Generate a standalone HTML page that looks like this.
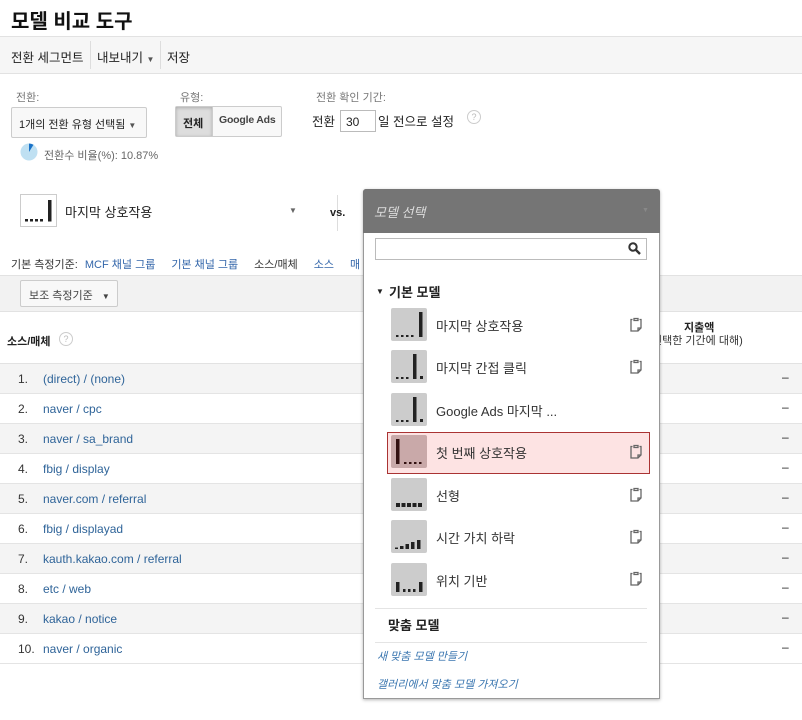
<!DOCTYPE html>
<html><head><meta charset="utf-8"><style>
*{margin:0;padding:0;box-sizing:border-box}
body{width:802px;height:720px;overflow:hidden;background:#fff;font-family:"Liberation Sans","Noto Sans CJK KR",sans-serif;color:#222;position:relative;font-size:12px}
.a{position:absolute;white-space:nowrap}
.lnk{color:#3366aa}
.row{position:absolute;left:0;width:802px;height:30px;border-bottom:1px solid #e4e4e4}
.row .n{position:absolute;left:18px;top:8px;font-size:12px;color:#333}
.row .t{position:absolute;left:43px;top:8px;font-size:12px;color:#2f6499}
.row .d{position:absolute;left:782px;top:6px;font-size:12px}
.item{position:absolute;left:436px;font-size:13px;color:#333}
.clip{position:absolute;left:630px}
</style></head><body>
<div class="a" style="left:11px;top:5px;font-size:20px;font-weight:bold;color:#111">모델 비교 도구</div>
<div class="a" style="left:0;top:36px;width:802px;height:38px;background:#f6f6f6;border-top:1px solid #e2e2e2;border-bottom:1px solid #e2e2e2"></div>
<div class="a" style="left:11px;top:47px;font-size:12.5px">전환 세그먼트</div>
<div class="a" style="left:90px;top:41px;width:1px;height:28px;background:#ddd"></div>
<div class="a" style="left:97px;top:47px;font-size:12.5px">내보내기 <span style="font-size:8px;color:#555">▼</span></div>
<div class="a" style="left:160px;top:41px;width:1px;height:28px;background:#ddd"></div>
<div class="a" style="left:167px;top:47px;font-size:12.5px">저장</div>
<div class="a" style="left:16px;top:89px;font-size:11px;color:#777">전환:</div>
<div class="a" style="left:11px;top:107px;width:136px;height:31px;border:1px solid #ccc;border-radius:2px;background:#f8f8f8;font-size:11px;padding:8px 0 0 7px">1개의 전환 유형 선택됨 <span style="font-size:8px;color:#555">▼</span></div>
<svg class="a" style="left:20px;top:143px" width="18" height="18"><circle cx="9" cy="9" r="8.5" fill="#bfe0f2"/><path d="M9 9V0.5A8.5 8.5 0 0 1 13.5 1.8Z" fill="#1a73c8"/></svg>
<div class="a" style="left:44px;top:147px;font-size:11px;color:#666">전환수 비율(%): 10.87%</div>
<div class="a" style="left:180px;top:89px;font-size:11px;color:#777">유형:</div>
<div class="a" style="left:175px;top:106px;width:107px;height:31px;border:1px solid #ccc;border-radius:2px;background:#f8f8f8"></div>
<div class="a" style="left:176px;top:107px;width:36px;height:29px;background:#ddd;box-shadow:inset 0 1px 3px #aaa;font-size:11px;font-weight:bold;padding:8px 0 0 7px">전체</div>
<div class="a" style="left:212px;top:107px;width:1px;height:29px;background:#ccc"></div>
<div class="a" style="left:219px;top:114px;font-size:10.5px;font-weight:bold;color:#444;letter-spacing:-0.2px">Google Ads</div>
<div class="a" style="left:316px;top:89px;font-size:11px;color:#777">전환 확인 기간:</div>
<div class="a" style="left:312px;top:111px;font-size:12.5px">전환</div>
<div class="a" style="left:340px;top:110px;width:36px;height:22px;border:1px solid #bbb;font-size:12px;padding:4px 0 0 5px">30</div>
<div class="a" style="left:378px;top:111px;font-size:12.5px">일 전으로 설정</div>
<div class="a" style="left:467px;top:110px;width:14px;height:14px;border:1px solid #ccc;border-radius:50%;font-size:9px;color:#bbb;text-align:center;line-height:12px">?</div>
<div class="a" style="left:20px;top:194px;width:37px;height:33px;border:1px solid #ccc;background:#fff"><svg width="35" height="31"><rect x="4" y="24" width="3" height="2.5" fill="#222"/><rect x="9" y="24" width="3" height="2.5" fill="#222"/><rect x="14" y="24" width="3" height="2.5" fill="#222"/><rect x="19" y="24" width="3" height="2.5" fill="#222"/><rect x="27" y="5" width="3.5" height="21.5" fill="#222"/></svg></div>
<div class="a" style="left:65px;top:202px;font-size:13px">마지막 상호작용</div>
<div class="a" style="left:289px;top:206px;font-size:8px;color:#666">▼</div>
<div class="a" style="left:337px;top:195px;width:1px;height:36px;background:#ddd"></div>
<div class="a" style="left:330px;top:207px;font-size:11px;font-weight:bold">vs.</div>
<div class="a" style="left:11px;top:256px;font-size:11px;color:#333">기본 측정기준: <span class="lnk" style="margin-left:4px">MCF 채널 그룹</span><span class="lnk" style="margin-left:16px">기본 채널 그룹</span><span style="margin-left:16px">소스/매체</span><span class="lnk" style="margin-left:16px">소스</span><span class="lnk" style="margin-left:16px">매</span></div>
<div class="a" style="left:0;top:275px;width:802px;height:37px;background:#f2f2f2;border-top:1px solid #e2e2e2;border-bottom:1px solid #e2e2e2"></div>
<div class="a" style="left:20px;top:280px;width:98px;height:27px;border:1px solid #ccc;border-radius:2px;background:#f8f8f8;font-size:11px;color:#444;padding:6px 0 0 8px">보조 측정기준 <span style="font-size:8px;margin-left:6px">▼</span></div>
<div class="a" style="left:7px;top:333px;font-size:11px;font-weight:bold">소스/매체</div>
<div class="a" style="left:59px;top:332px;width:14px;height:14px;border:1px solid #ccc;border-radius:50%;font-size:9px;color:#bbb;text-align:center;line-height:12px">?</div>
<div class="a" style="left:684px;top:319px;font-size:11px;font-weight:bold">지출액</div>
<div class="a" style="left:652px;top:332px;font-size:11px;color:#333">선택한 기간에 대해)</div>
<div class="a" style="left:0;top:363px;width:802px;height:1px;background:#e2e2e2"></div>
<div class="row" style="top:364px;background:#f4f4f4"><span class="n">1.</span><span class="t">(direct) / (none)</span><span class="d">–</span></div>
<div class="row" style="top:394px"><span class="n">2.</span><span class="t">naver / cpc</span><span class="d">–</span></div>
<div class="row" style="top:424px;background:#f4f4f4"><span class="n">3.</span><span class="t">naver / sa_brand</span><span class="d">–</span></div>
<div class="row" style="top:454px"><span class="n">4.</span><span class="t">fbig / display</span><span class="d">–</span></div>
<div class="row" style="top:484px;background:#f4f4f4"><span class="n">5.</span><span class="t">naver.com / referral</span><span class="d">–</span></div>
<div class="row" style="top:514px"><span class="n">6.</span><span class="t">fbig / displayad</span><span class="d">–</span></div>
<div class="row" style="top:544px;background:#f4f4f4"><span class="n">7.</span><span class="t">kauth.kakao.com / referral</span><span class="d">–</span></div>
<div class="row" style="top:574px"><span class="n">8.</span><span class="t">etc / web</span><span class="d">–</span></div>
<div class="row" style="top:604px;background:#f4f4f4"><span class="n">9.</span><span class="t">kakao / notice</span><span class="d">–</span></div>
<div class="row" style="top:634px"><span class="n">10.</span><span class="t">naver / organic</span><span class="d">–</span></div>

<div class="a" style="left:363px;top:189px;width:297px;height:510px;background:#fff;border:1px solid #999;border-radius:3px 3px 0 0;box-shadow:0 1px 3px rgba(0,0,0,.3)"></div>
<div class="a" style="left:363px;top:189px;width:297px;height:44px;background:#757575;border-radius:3px 3px 0 0"></div>
<div class="a" style="left:374px;top:202px;font-size:13px;font-style:italic;color:#ddd">모델 선택</div>
<div class="a" style="left:642px;top:207px;font-size:7px;color:#888">▼</div>
<div class="a" style="left:375px;top:238px;width:272px;height:22px;border:1px solid #bbb"></div>
<svg class="a" style="left:628px;top:242px" width="13" height="13"><circle cx="5" cy="5" r="3.7" fill="none" stroke="#333" stroke-width="2"/><path d="M8 8l4 4" stroke="#333" stroke-width="2.4"/></svg>
<div class="a" style="left:376px;top:287px;font-size:8px">▼</div>
<div class="a" style="left:389px;top:282px;font-size:13px;font-weight:bold">기본 모델</div>

<div class="a" style="left:387px;top:432px;width:263px;height:42px;background:#fde3e3;border:1px solid #a33"></div>

<svg class="a" style="left:391px;top:308px" width="36" height="33"><rect width="36" height="33" rx="2" fill="#ccc"/><g fill="#222"><rect x="5" y="27" width="2.5" height="2"/><rect x="10" y="27" width="2.5" height="2"/><rect x="15" y="27" width="2.5" height="2"/><rect x="20" y="27" width="2.5" height="2"/><rect x="28" y="4" width="3.5" height="25"/></g></svg>
<svg class="a" style="left:391px;top:350px" width="36" height="33"><rect width="36" height="33" rx="2" fill="#ccc"/><g fill="#222"><rect x="5" y="27" width="2.5" height="2"/><rect x="10" y="27" width="2.5" height="2"/><rect x="15" y="27" width="2.5" height="2"/><rect x="22" y="4" width="3.5" height="25"/><rect x="29" y="26" width="3" height="3"/></g></svg>
<svg class="a" style="left:391px;top:393px" width="36" height="33"><rect width="36" height="33" rx="2" fill="#ccc"/><g fill="#222"><rect x="5" y="27" width="2.5" height="2"/><rect x="10" y="27" width="2.5" height="2"/><rect x="15" y="27" width="2.5" height="2"/><rect x="22" y="4" width="3.5" height="25"/><rect x="29" y="26" width="3" height="3"/></g></svg>
<svg class="a" style="left:391px;top:435px" width="36" height="33"><rect width="36" height="33" rx="2" fill="#c9a9a9"/><g fill="#311"><rect x="5" y="4" width="3.5" height="25"/><rect x="13" y="27" width="2.5" height="2"/><rect x="18" y="27" width="2.5" height="2"/><rect x="23" y="27" width="2.5" height="2"/><rect x="28" y="27" width="2.5" height="2"/></g></svg>
<svg class="a" style="left:391px;top:478px" width="36" height="33"><rect width="36" height="33" rx="2" fill="#ccc"/><g fill="#222"><rect x="5" y="25" width="4" height="4"/><rect x="10.5" y="25" width="4" height="4"/><rect x="16" y="25" width="4" height="4"/><rect x="21.5" y="25" width="4" height="4"/><rect x="27" y="25" width="4" height="4"/></g></svg>
<svg class="a" style="left:391px;top:520px" width="36" height="33"><rect width="36" height="33" rx="2" fill="#ccc"/><g fill="#222"><rect x="4" y="27.5" width="3" height="1.5"/><rect x="9" y="26" width="3.5" height="3"/><rect x="14.5" y="24" width="3.5" height="5"/><rect x="20" y="22" width="3.5" height="7"/><rect x="26" y="20" width="3.5" height="9"/></g></svg>
<svg class="a" style="left:391px;top:563px" width="36" height="33"><rect width="36" height="33" rx="2" fill="#ccc"/><g fill="#222"><rect x="5" y="19" width="3.5" height="10"/><rect x="12" y="26" width="2.5" height="3"/><rect x="17" y="26" width="2.5" height="3"/><rect x="22" y="26" width="2.5" height="3"/><rect x="28" y="19" width="3.5" height="10"/></g></svg>

<div class="item" style="top:316px">마지막 상호작용</div>
<div class="item" style="top:358px">마지막 간접 클릭</div>
<div class="item" style="top:401px">Google Ads 마지막 ...</div>
<div class="item" style="top:443px">첫 번째 상호작용</div>
<div class="item" style="top:486px">선형</div>
<div class="item" style="top:528px">시간 가치 하락</div>
<div class="item" style="top:571px">위치 기반</div>
<svg class="clip" style="top:317px" width="12" height="15"><path d="M4 1.5h4v2H4z M2.5 2.5h-1.5v11.5h7l3-3V2.5h-1.5" fill="none" stroke="#666" stroke-width="1.3"/><path d="M8 14v-3h3" fill="none" stroke="#666" stroke-width="1.3"/></svg>
<svg class="clip" style="top:359px" width="12" height="15"><path d="M4 1.5h4v2H4z M2.5 2.5h-1.5v11.5h7l3-3V2.5h-1.5" fill="none" stroke="#666" stroke-width="1.3"/><path d="M8 14v-3h3" fill="none" stroke="#666" stroke-width="1.3"/></svg>
<svg class="clip" style="top:444px" width="12" height="15"><path d="M4 1.5h4v2H4z M2.5 2.5h-1.5v11.5h7l3-3V2.5h-1.5" fill="none" stroke="#666" stroke-width="1.3"/><path d="M8 14v-3h3" fill="none" stroke="#666" stroke-width="1.3"/></svg>
<svg class="clip" style="top:487px" width="12" height="15"><path d="M4 1.5h4v2H4z M2.5 2.5h-1.5v11.5h7l3-3V2.5h-1.5" fill="none" stroke="#666" stroke-width="1.3"/><path d="M8 14v-3h3" fill="none" stroke="#666" stroke-width="1.3"/></svg>
<svg class="clip" style="top:529px" width="12" height="15"><path d="M4 1.5h4v2H4z M2.5 2.5h-1.5v11.5h7l3-3V2.5h-1.5" fill="none" stroke="#666" stroke-width="1.3"/><path d="M8 14v-3h3" fill="none" stroke="#666" stroke-width="1.3"/></svg>
<svg class="clip" style="top:571px" width="12" height="15"><path d="M4 1.5h4v2H4z M2.5 2.5h-1.5v11.5h7l3-3V2.5h-1.5" fill="none" stroke="#666" stroke-width="1.3"/><path d="M8 14v-3h3" fill="none" stroke="#666" stroke-width="1.3"/></svg>
<div class="a" style="left:375px;top:608px;width:272px;height:1px;background:#e4e4e4"></div>
<div class="a" style="left:388px;top:615px;font-size:13px;font-weight:bold">맞춤 모델</div>
<div class="a" style="left:375px;top:642px;width:272px;height:1px;background:#e4e4e4"></div>
<div class="a" style="left:377px;top:648px;font-size:11px;font-style:italic;color:#3a76b0">새 맞춤 모델 만들기</div>
<div class="a" style="left:377px;top:676px;font-size:11px;font-style:italic;color:#3a76b0">갤러리에서 맞춤 모델 가져오기</div>
</body></html>
